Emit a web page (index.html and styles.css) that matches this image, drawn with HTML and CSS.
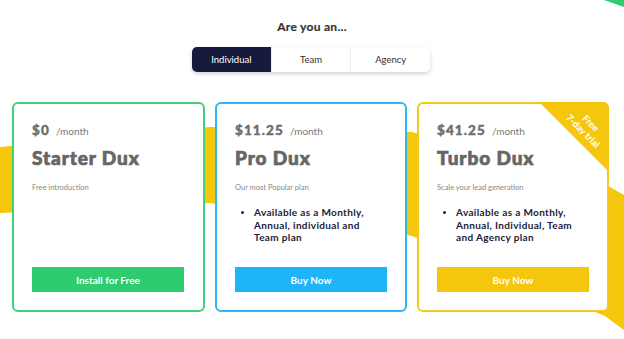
FILE: index.html
```html
<!DOCTYPE html>
<html>
<head>
<meta charset="utf-8">
<link rel="stylesheet" href="styles.css">
</head>
<body>
<div class="page">
  <svg class="bg" width="624" height="339" viewBox="0 0 624 339">
    <polygon fill="#f4c70d" points="0,147 210,127 412,132 610,187 624,195 624,330 605,316 412,236 210,203 0,213"/>
    <polygon fill="#2ecc71" points="604,0 624,0 624,7"/>
  </svg>
  <h2 class="heading">Are you an...</h2>
  <div class="tabs">
    <div class="tab active">Individual</div>
    <div class="tab">Team</div>
    <div class="tab">Agency</div>
  </div>
  <div class="cards">
    <div class="card green">
      <div class="price"><b>$0</b><span>/month</span></div>
      <div class="title">Starter Dux</div>
      <div class="desc">Free introduction</div>
      <a class="btn">Install for Free</a>
    </div>
    <div class="card blue">
      <div class="price"><b>$11.25</b><span>/month</span></div>
      <div class="title">Pro Dux</div>
      <div class="desc">Our most Popular plan</div>
      <ul class="feats"><li>Available as a Monthly, Annual, individual and Team plan</li></ul>
      <a class="btn">Buy Now</a>
    </div>
    <div class="card yellow">
      <div class="badge"><div class="badge-text">Free<br>7-day trial</div></div>
      <div class="price"><b>$41.25</b><span>/month</span></div>
      <div class="title">Turbo Dux</div>
      <div class="desc">Scale your lead generation</div>
      <ul class="feats"><li>Available as a Monthly, Annual, Individual, Team and Agency plan</li></ul>
      <a class="btn">Buy Now</a>
    </div>
  </div>
</div>
</body>
</html>
```
FILE: styles.css
```css
* { box-sizing: border-box; }
html, body { margin: 0; padding: 0; background: #fff; }
body { font-family: Lato, "Open Sans", sans-serif; width: 624px; height: 339px; overflow: hidden; }
.page { position: relative; width: 624px; height: 339px; padding-top: 19px; }
.bg { position: absolute; left: 0; top: 0; z-index: 0; }
.heading {
  position: relative; margin: 0; text-align: center;
  font-size: 12px; line-height: 16px; font-weight: 700; color: #333; letter-spacing: 0.3px;
  -webkit-text-stroke: 0.2px #333;
}
.tabs {
  position: relative; display: flex; width: 238px; height: 25px; margin: 12px 0 0 192px;
  background: #fff; border-radius: 5px;
  box-shadow: 0 2px 4px rgba(0,0,0,0.18);
}
.tab {
  flex: 1; display: flex; align-items: center; justify-content: center;
  font-size: 9.5px; color: #333; border-left: 1px solid #eee;
}
.tab:first-child { border-left: none; }
.tab.active { background: #161b3d; color: #fff; border-radius: 5px 0 0 5px; }
.cards {
  position: relative; display: flex; gap: 10px; margin: 30px 0 0 12px;
}
.card {
  position: relative; width: 192px; height: 210px; background: #fff;
  border: 2px solid; border-radius: 6px; padding: 18px;
  display: flex; flex-direction: column;
}
.card:first-child { width: 193px; }
.green { border-color: #40d07a; }
.blue { border-color: #2ab8f2; }
.yellow { border-color: #f5c91c; }
.price { display: flex; align-items: baseline; gap: 6px; height: 16px; line-height: 16px; color: #6e6e6e; }
.price b { font-size: 13.5px; font-weight: 900; letter-spacing: 1.1px; -webkit-text-stroke: 0.4px #6e6e6e; }
.price span { font-size: 10px; color: #777; }
.title {
  margin-top: 8px; font-size: 19px; line-height: 24px; font-weight: 900; color: #666;
  letter-spacing: 0.9px; -webkit-text-stroke: 0.7px #666;
}
.desc { margin-top: 13px; font-size: 7.5px; line-height: 10px; color: #888; }
.feats {
  margin: 13px 0 0; padding: 0 11px 0 19px; color: #1a1d3a; font-size: 10px; line-height: 12.5px;
  font-weight: 700; letter-spacing: 0.35px;
}
.feats li::marker { font-size: 9px; }
.btn {
  margin-top: auto; display: flex; align-items: center; justify-content: center;
  height: 25px; width: 152px; color: #fff; font-size: 10px; font-weight: 700;
}
.green .btn { background: #2ecb6f; }
.blue .btn { background: #1eb4f7; }
.yellow .btn { background: #f5c60e; }
.badge {
  position: absolute; top: -2px; right: -2px; width: 70px; height: 70px;
  background: #f5c60e; clip-path: polygon(0 0, 100% 0, 100% 100%);
  border-top-right-radius: 6px;
}
.badge-text {
  position: absolute; left: 13px; top: 14px; width: 70px; height: 22px;
  transform: rotate(45deg); text-align: center; color: #fff;
  font-size: 9.5px; line-height: 11px; font-weight: 700;
}
```
